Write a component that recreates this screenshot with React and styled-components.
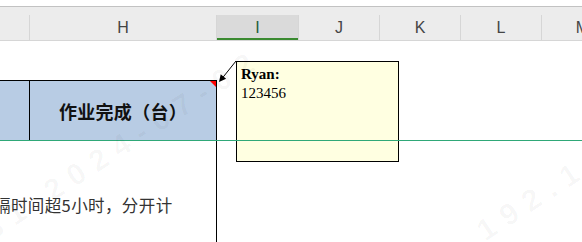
import React from 'react'
import styled, { createGlobalStyle } from "styled-components";

const GlobalStyle = createGlobalStyle`
html, body {
  margin: 0;
  padding: 0;
  background: #ffffff;
}
body {
  width: 582px;
  height: 242px;
  overflow: hidden;
}
`;

const COLS = "30px 187px 82px 81px 81px 81px 82px";
const CJK = `"Noto Sans CJK SC", "Noto Sans", sans-serif`;

const Sheet = styled.div`
position: relative;
width: 582px;
height: 242px;
overflow: hidden;
display: flex;
flex-direction: column;
background: #fff;
`;
const TopGap = styled.div`
height: 6px;
border-bottom: 1px solid #c2c2c2;
`;
const HeaderRow = styled.div`
display: grid;
grid-template-columns: ${COLS};
padding-top: 8px;
background: #ececec;
border-bottom: 1px solid #d6d6d6;
`;
const HeaderCell = styled.div`
height: 25px;
display: flex;
align-items: center;
justify-content: center;
border-right: 1px solid #d6d6d6;
background: ${p => (p.$selected ? "#dadada" : "transparent")};
box-shadow: ${p => (p.$selected ? "inset 0 -2px 0 #3a8a30" : "none")};
color: ${p => (p.$selected ? "#22603a" : "#454545")};
font-family: "Liberation Sans", Arial, sans-serif;
font-size: 16px;
box-sizing: border-box;
`;
const SpacerRow = styled.div`
height: 39px;
`;
const FrozenRow = styled.div`
position: relative;
z-index: 3;
display: grid;
grid-template-columns: ${COLS};
height: 61px;
box-sizing: border-box;
border-bottom: 1px solid #2fa878;
`;
const TitleCell = styled.div`
position: relative;
background: #b8cce4;
border-top: 1px solid #000;
border-right: 1px solid #000;
display: flex;
align-items: center;
justify-content: center;
font-family: ${CJK};
font-weight: 700;
font-size: 18px;
color: #111;
letter-spacing: 0.3px;
${p => p.$flagged && `
  &::after {
    content: "";
    position: absolute;
    top: 0;
    right: 0;
    border-top: 6px solid #ff0000;
    border-left: 6px solid transparent;
  }
`}
`;
const BodyRow = styled.div`
flex: 1;
display: grid;
grid-template-columns: ${COLS};
`;
const NoteCell = styled.div`
grid-column: 1 / 3;
border-right: 1px solid #000;
padding-top: 54px;
`;
const NoteText = styled.span`
display: block;
margin-left: -6px;
white-space: nowrap;
font-family: ${CJK};
font-size: 16.5px;
letter-spacing: 0.4px;
line-height: 20px;
color: #333;
`;
const Comment = styled.div`
position: absolute;
z-index: 2;
left: 236px;
top: 61px;
width: 163px;
height: 101px;
box-sizing: border-box;
background: #ffffe1;
border: 1px solid #000;
padding: 3px 4px;
font-family: "Liberation Serif", "Times New Roman", ${CJK};
font-size: 15px;
line-height: 19px;
color: #000;
`;
const Author = styled.div`
font-weight: 700;
`;
const Arrow = styled.svg`
position: absolute;
z-index: 4;
left: 215px;
top: 58px;
`;
const Watermark = styled.span`
position: absolute;
z-index: 5;
left: ${p => p.$x}px;
top: ${p => p.$y}px;
transform: rotate(-33deg);
transform-origin: left bottom;
white-space: nowrap;
font-family: "Liberation Sans", Arial, sans-serif;
font-weight: 700;
font-size: 30px;
line-height: 30px;
letter-spacing: 10px;
color: rgba(0, 0, 0, 0.035);
pointer-events: none;
`;

const letters = ["", "H", "I", "J", "K", "L", "M"];

const App = () => {
  return (
    <Sheet>
      <GlobalStyle />
      <TopGap />
      <HeaderRow>
        {letters.map((l, i) => (
          <HeaderCell key={i} $selected={l === "I"}>
            {l}
          </HeaderCell>
        ))}
      </HeaderRow>
      <SpacerRow />
      <FrozenRow>
        <TitleCell />
        <TitleCell $flagged>作业完成（台）</TitleCell>
      </FrozenRow>
      <BodyRow>
        <NoteCell>
          <NoteText>隔时间超5小时，分开计</NoteText>
        </NoteCell>
      </BodyRow>

      <Comment>
        <Author>Ryan:</Author>
        <div>123456</div>
      </Comment>
      <Arrow width="25" height="28" viewBox="0 0 25 28">
        <line x1="21" y1="3" x2="7" y2="20.5" stroke="#000" strokeWidth="1" />
        <polygon points="4,24 11.1,20.7 5.7,16.3" fill="#000" />
      </Arrow>

      <Watermark $x={-5} $y={215}>31 2024-07-02</Watermark>
      <Watermark $x={488} $y={216}>192.168</Watermark>
    </Sheet>
  )
}

export default App
